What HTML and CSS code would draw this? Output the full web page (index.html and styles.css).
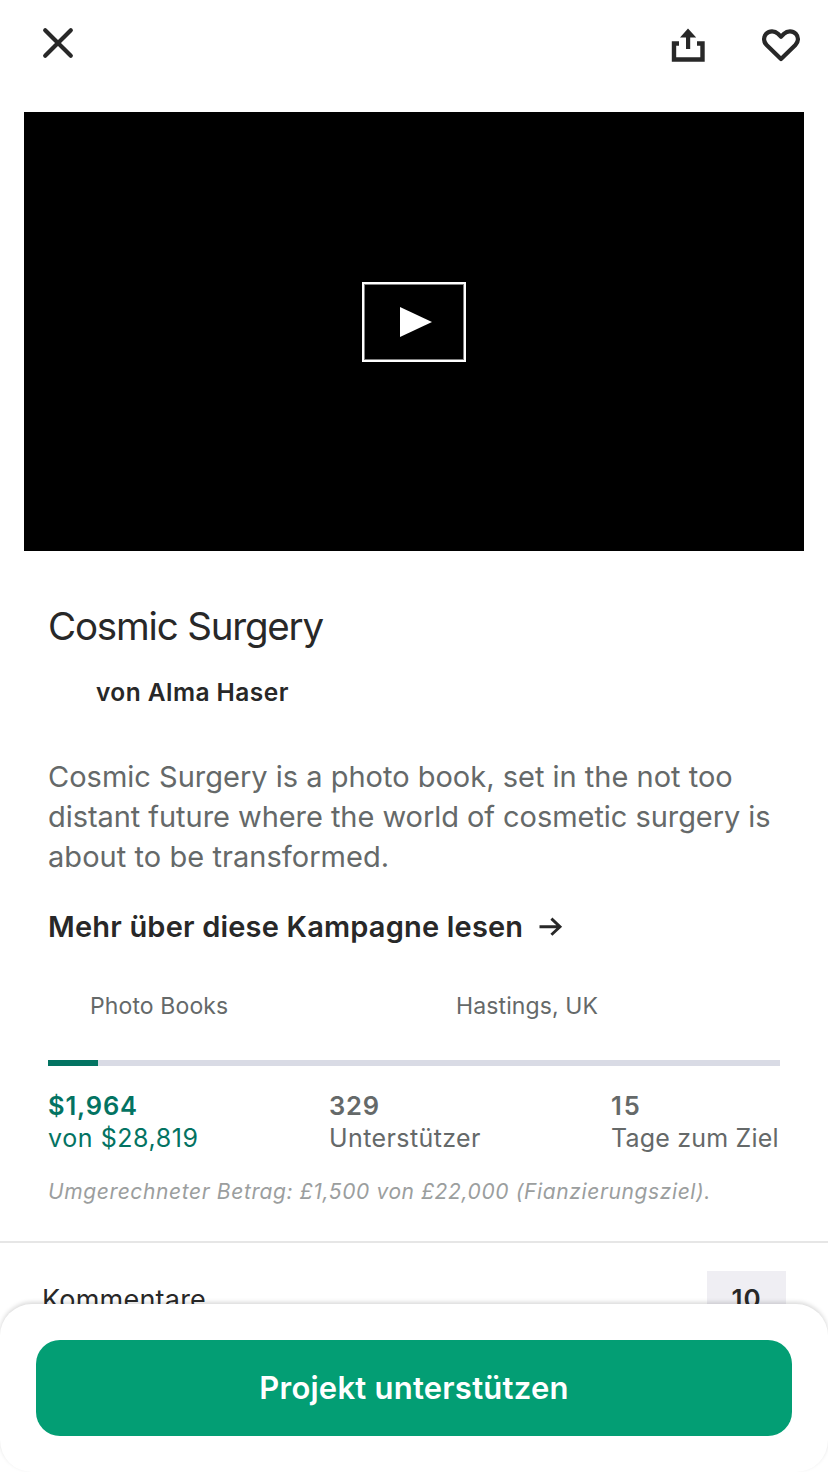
FILE: index.html
```html
<!DOCTYPE html>
<html lang="de">
<head>
<meta charset="utf-8">
<title>Cosmic Surgery</title>
<link rel="stylesheet" href="styles.css">
</head>
<body>
<div class="screen">
  <header class="topbar">
    <svg class="icon-close" width="34" height="34" viewBox="0 0 34 34"><path d="M4.200 4.200L29.800 29.800M29.800 4.200L4.200 29.800" fill="none" stroke="#282828" stroke-width="4.200" stroke-linecap="round"/></svg>
    <div class="actions">
      <svg class="icon-share" width="34" height="36" viewBox="0 0 34 36"><path d="M8 15.500H3V31.500H31.500V15.500H26" fill="none" stroke="#282828" stroke-width="4.400"/><path d="M17 0.500L25.200 9.500H19.200V21H15V9.500H9Z" fill="#282828"/></svg>
      <svg class="icon-heart" width="40" height="36" viewBox="0 0 40 36"><path d="M20 31L5.600 17C2.400 13.800 2.200 9 5.200 5.800C8.500 2.400 13.600 2.500 17 5.800L20 8.700L23 5.800C26.400 2.500 31.500 2.400 34.800 5.800C37.800 9 37.600 13.800 34.400 17Z" fill="none" stroke="#282828" stroke-width="4.200" stroke-linejoin="round"/></svg>
    </div>
  </header>
  <div class="video">
    <div class="play"><svg width="32" height="32" viewBox="0 0 32 32"><path d="M0 1V31L32 16Z" fill="#fff"/></svg></div>
  </div>
  <main class="project">
    <h1 class="title">Cosmic Surgery</h1>
    <p class="creator">von Alma Haser</p>
    <p class="blurb"><span>Cosmic Surgery is a photo book, set in the not too</span><br><span class="tight">distant future where the world of cosmetic surgery is</span><br><span class="loose">about to be transformed.</span></p>
    <a class="more"><span>Mehr über diese Kampagne lesen</span><svg width="24" height="20" viewBox="0 0 24 20"><path d="M0.500 10.700H21.500M12.400 2.600L21 10.700L12.400 18.800" fill="none" stroke="#282828" stroke-width="2.900"/></svg></a>
    <div class="meta"><span class="category">Photo Books</span><span class="place">Hastings, UK</span></div>
    <div class="progress"><div class="progress-fill"></div></div>
    <div class="stats">
      <div class="stat pledged"><strong>$1,964</strong><span>von $28,819</span></div>
      <div class="stat backers"><strong>329</strong><span>Unterstützer</span></div>
      <div class="stat days"><strong>15</strong><span>Tage zum Ziel</span></div>
    </div>
    <p class="conversion">Umgerechneter Betrag: £1,500 von £22,000 (Fianzierungsziel).</p>
  </main>
  <div class="comments"><span class="comments-label">Kommentare</span><span class="badge">10</span></div>
  <div class="sheet"><button class="pledge">Projekt unterstützen</button></div>
</div>
</body>
</html>
```
FILE: styles.css
```css
* { box-sizing: border-box; }
body { margin: 0; background: #fff; font-family: Inter, "Liberation Sans", sans-serif; color: #282828; }
h1, p { margin: 0; font-weight: 400; }
svg { display: block; flex: none; }
.screen { position: relative; width: 828px; height: 1472px; overflow: hidden; white-space: nowrap; }
.topbar { display: flex; justify-content: space-between; height: 112px; padding: 26px 27px 0 41px; }
.actions { display: flex; gap: 56px; padding-top: 2px; }
.video { display: flex; align-items: center; justify-content: center; height: 439px; margin: 0 24px; padding-bottom: 19px; background: #000; }
.play { display: flex; align-items: center; width: 104px; height: 80px; padding-left: 36px; border: 2px solid #fff; box-shadow: inset 0 0 0 1px #808080; }
.project { padding: 51px 48px 0; }
.title { font-size: 38.500px; line-height: 49px; letter-spacing: -1.180px; }
.creator { margin-top: 25px; padding-left: 48px; font-size: 24.500px; line-height: 32px; font-weight: 600; letter-spacing: 0.450px; }
.blurb { margin-top: 49px; font-size: 29px; line-height: 40px; color: #656969; }
.tight { letter-spacing: -0.055px; }
.loose { letter-spacing: 0.050px; }
.more { display: flex; align-items: center; gap: 16px; height: 40px; margin-top: 29px; font-size: 29px; font-weight: 600; letter-spacing: 0.190px; }
.meta { display: grid; grid-template-columns: 366px 366px; margin-top: 44px; padding-left: 42px; font-size: 23px; line-height: 32px; letter-spacing: 0.120px; color: #656969; }
.progress { height: 6px; margin-top: 38px; background: #d9dbe5; }
.progress-fill { width: 50px; height: 6px; background: #037362; }
.stats { display: grid; grid-template-columns: 281px 282px auto; margin-top: 24px; font-size: 25px; line-height: 32px; color: #656969; }
.stat { display: flex; flex-direction: column; letter-spacing: 0.400px; }
.stat strong { font-size: 25.500px; font-weight: 600; letter-spacing: 0.850px; }
.pledged { color: #037362; letter-spacing: 0.580px; }
.days { letter-spacing: 0.200px; }
.days strong { letter-spacing: 2px; }
.conversion { margin-top: 24px; font-size: 21px; line-height: 28px; font-style: italic; letter-spacing: 0.620px; color: #9b9e9e; }
.comments { display: flex; align-items: center; justify-content: space-between; height: 114px; margin-top: 35px; padding: 0 42px; border-top: 2px solid #e6e6e6; font-size: 26px; }
.comments-label { font-size: 27px; letter-spacing: 0.220px; }
.badge { width: 79px; height: 56px; line-height: 56px; text-align: center; background: #efeef3; font-weight: 600; letter-spacing: 0.900px; }
.sheet { position: absolute; left: 0; right: 0; bottom: 0; height: 168px; padding: 36px; background: #fff; border-radius: 32px; box-shadow: 0 -2px 4px rgba(0,0,0,.15); }
.pledge { display: block; width: 756px; height: 96px; padding: 0; border: 0; border-radius: 24px; background: #039e74; color: #fff; font: 600 31px/96px Inter, sans-serif; letter-spacing: 0.230px; }
```
